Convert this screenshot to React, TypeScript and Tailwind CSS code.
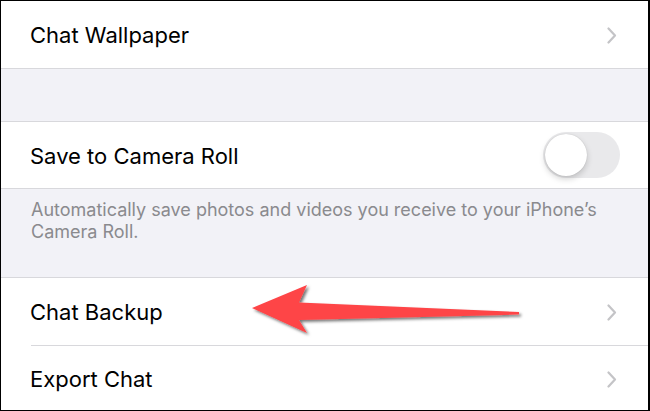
import React from "react";

const Chevron = () => (
  <svg width="10" height="17" viewBox="0 0 10 17" className="shrink-0">
    <polyline points="1.5,1.5 8,8.5 1.5,15.5" fill="none" stroke="#c4c4c7" strokeWidth="2.2" strokeLinecap="round" strokeLinejoin="round" />
  </svg>
);

export default function App() {
  return (
    <div
      className="relative w-[650px] h-[411px] border border-r-2 border-black bg-[#f2f2f7] flex flex-col overflow-hidden"
      style={{ fontFamily: "Inter, 'Noto Sans', sans-serif" }}
    >
      <div className="h-[68px] shrink-0 bg-white border-b border-[#d8d8dc] flex items-center justify-between pl-[29px] pr-[31px] pt-[2px]">
        <span className="text-[22px] text-black">Chat Wallpaper</span>
        <Chevron />
      </div>
      <div className="h-[53px] shrink-0 border-b border-[#d8d8dc]" />
      <div className="h-[67px] shrink-0 bg-white border-b border-[#d8d8dc] flex items-center justify-between pl-[29px] pr-[28px]">
        <span className="text-[22px] text-black pt-[2px]">Save to Camera Roll</span>
        <div className="w-[77px] h-[46px] rounded-full bg-[#e9e9eb] p-[2px] flex items-center">
          <div className="w-[42px] h-[42px] rounded-full bg-white shadow-[0_3px_6px_rgba(0,0,0,0.18),0_0_1px_rgba(0,0,0,0.2)]" />
        </div>
      </div>
      <div className="h-[89px] shrink-0 border-b border-[#d8d8dc] pl-[30px] pr-[10px] pt-[10px] text-[18px] leading-[22px] text-[#8a8a8e] whitespace-nowrap">
        Automatically save photos and videos you receive to your iPhone’s
        <br />
        Camera Roll.
      </div>
      <div className="h-[67px] shrink-0 bg-white flex">
        <div className="flex-1 flex items-center justify-between pl-[29px] pr-[31px] pt-[2px]">
          <span className="text-[22px] text-black">Chat Backup</span>
          <Chevron />
        </div>
      </div>
      <div className="shrink-0 bg-white pl-[30px]">
        <div className="h-px bg-[#d8d8dc]" />
      </div>
      <div className="flex-1 bg-white flex items-center justify-between pl-[29px] pr-[31px] pt-[2px]">
        <span className="text-[22px] text-black">Export Chat</span>
        <Chevron />
      </div>

      <svg className="absolute left-[-1px] top-[-1px] pointer-events-none" width="650" height="411" viewBox="0 0 650 411">
        <defs>
          <filter id="sh" x="-10%" y="-50%" width="120%" height="200%">
            <feDropShadow dx="2" dy="2" stdDeviation="1.5" floodColor="#000" floodOpacity="0.55" />
          </filter>
        </defs>
        <polygon
          points="252,308 307,285 299,302.5 519,312 519,314.5 299,320 307,333"
          fill="#fe4447"
          filter="url(#sh)"
        />
      </svg>
    </div>
  );
}
